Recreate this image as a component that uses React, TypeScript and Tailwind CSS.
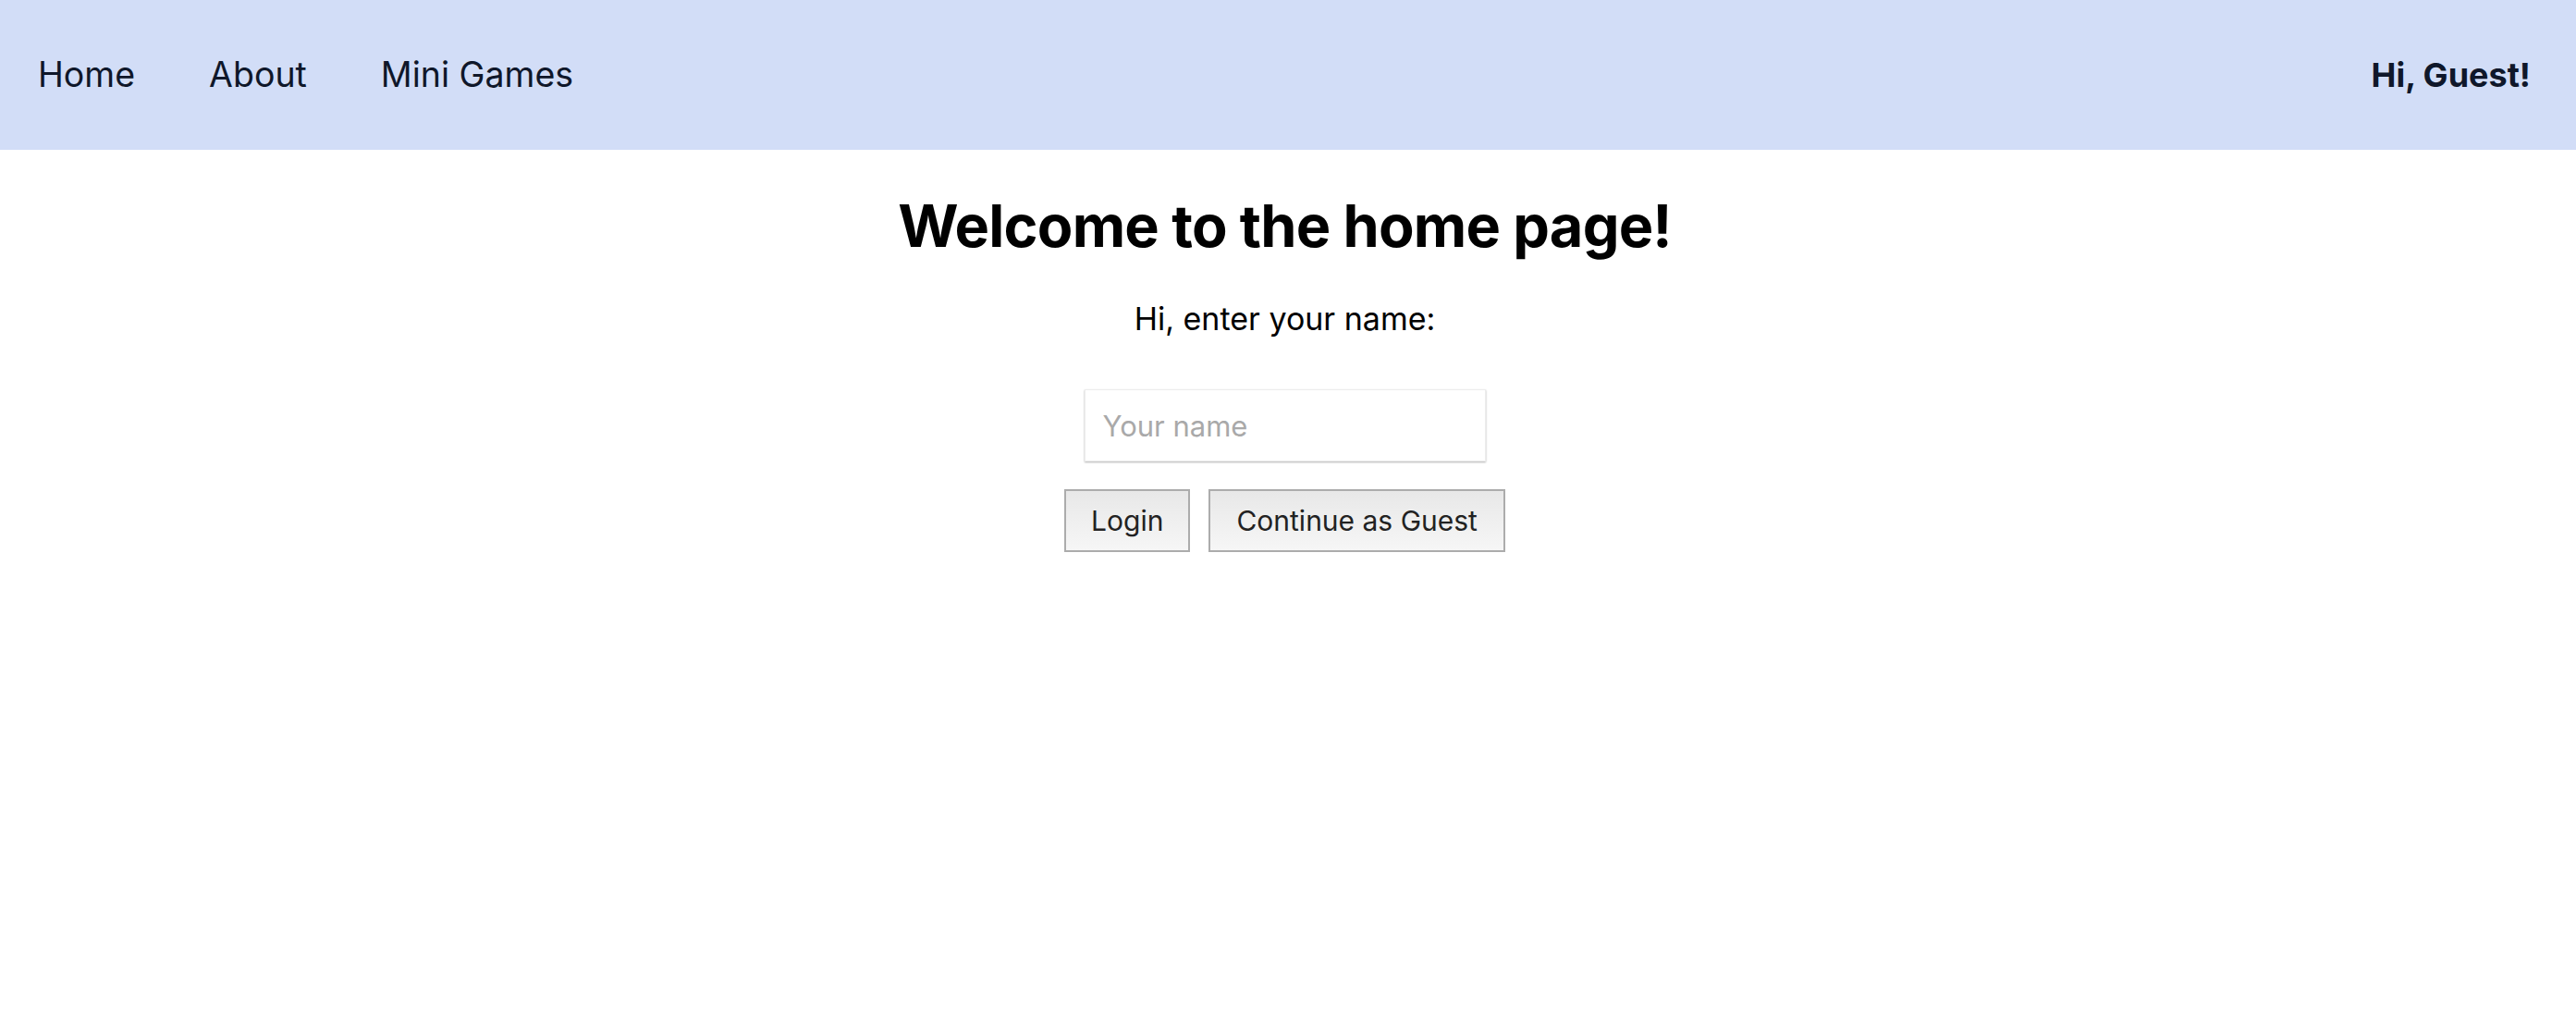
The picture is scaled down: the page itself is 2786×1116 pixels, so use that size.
import React, { useState } from "react";

const navLinks = ["Home", "About", "Mini Games"];

const App = () => {
    const [name, setName] = useState("");

    return (
        <div className="min-h-screen bg-white font-['Inter','Liberation_Sans',sans-serif]">
            {/* Navbar */}
            <nav className="h-[162px] bg-[#d2ddf7] flex items-center justify-between pl-[41px] pr-[49px]">
                <ul className="flex items-center gap-[80px]">
                    {navLinks.map((link) => (
                        <li key={link}>
                            <a href="#" className="text-[37.5px] leading-none text-[#0f172a]">
                                {link}
                            </a>
                        </li>
                    ))}
                </ul>
                <span className="text-[36px] leading-none font-bold text-[#0f172a]">Hi, Guest!</span>
            </nav>

            {/* Main */}
            <main className="flex flex-col items-center text-center pr-[7px]">
                <h1 className="mt-[51px] text-[63px] leading-none font-bold text-black tracking-[-0.8px]">
                    Welcome to the home page!
                </h1>
                <p className="mt-[52px] text-[34px] leading-none text-black">Hi, enter your name:</p>

                <input
                    type="text"
                    placeholder="Your name"
                    value={name}
                    onChange={(e) => setName(e.target.value)}
                    className="mt-[59px] w-[434px] h-[78px] px-[19px] text-[31px] text-black bg-white border border-[#ececec] shadow-[0_1px_2px_rgba(0,0,0,0.3)] outline-none placeholder:text-[#a9a9a9]"
                />

                <div className="mt-[30px] flex gap-[20px]">
                    <button className="h-[68px] px-[27px] text-[30px] text-[#222] border-2 border-[#acacac] bg-gradient-to-b from-[#e8e8e8] to-[#f6f6f6]">
                        Login
                    </button>
                    <button className="h-[68px] px-[28px] text-[30px] text-[#222] border-2 border-[#acacac] bg-gradient-to-b from-[#e8e8e8] to-[#f6f6f6]">
                        Continue as Guest
                    </button>
                </div>
            </main>
        </div>
    );
};

export default App;
